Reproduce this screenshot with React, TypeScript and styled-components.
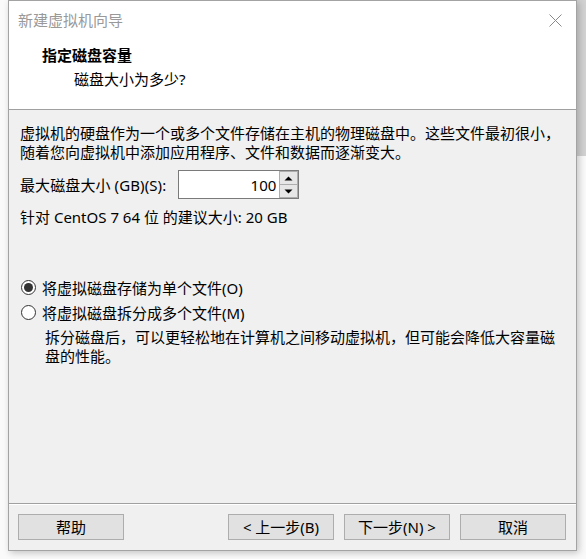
import React from 'react'
import styled, {createGlobalStyle} from 'styled-components'

const GlobalStyle = createGlobalStyle`
  html, body {
    margin: 0;
    padding: 0;
    background: #fafafa;
  }
  body {
    font-family: "Noto Sans", "Noto Sans CJK SC", sans-serif;
    font-size: 15px;
    color: #000;
  }
`

const Page = styled.div`
  display: grid;
  grid-template-columns: 8px 569px 9px;
  height: 559px;
  overflow: hidden;
`

const BackdropStrip = styled.div`
  grid-column: 3;
  height: 156px;
  background: #d2d2d2;
`

const Window = styled.div`
  grid-column: 2;
  grid-row: 1;
  height: 551px;
  box-sizing: border-box;
  border: 1px solid #a3a3a3;
  background: #f0f0f0;
  display: flex;
  flex-direction: column;
  box-shadow: 2px 2px 7px rgba(0, 0, 0, 0.22);
  position: relative;
  z-index: 1;
`

const Header = styled.div`
  height: 108px;
  background: #fff;
  border-bottom: 1px solid #a0a0a0;
  display: flex;
  flex-direction: column;
`

const TitleBar = styled.div`
  height: 38px;
  display: flex;
  align-items: center;
  justify-content: space-between;
  padding: 0 14px 0 9px;
`

const Title = styled.span`
  color: #999;
  line-height: 19px;
`

const CloseButton = styled.span`
  width: 14px;
  height: 14px;
  display: flex;
  align-items: center;
  justify-content: center;
`

const Heading = styled.div`
  margin-top: 7px;
  padding-left: 33px;
  font-weight: bold;
  line-height: 19px;
`

const SubHeading = styled.div`
  margin-top: 5px;
  padding-left: 65px;
  line-height: 19px;
`

const Body = styled.div`
  flex: 1;
  padding: 14px 11px 0;
  display: flex;
  flex-direction: column;
`

const Paragraph = styled.p<{indent?: number}>`
  margin: 0;
  line-height: 19px;
  padding-left: ${(p) => p.indent ?? 0}px;
`

const SizeRow = styled.div`
  margin-top: 8px;
  display: flex;
  align-items: center;
  gap: 12px;
  height: 29px;
`

const SizeLabel = styled.span`
  letter-spacing: 0.1px;
`

const SpinBox = styled.div`
  width: 121px;
  height: 29px;
  box-sizing: border-box;
  border: 1px solid #7a7a7a;
  background: #fff;
  display: flex;
`

const SpinInput = styled.input`
  flex: 1;
  min-width: 0;
  border: none;
  outline: none;
  background: transparent;
  font: inherit;
  text-align: right;
  padding: 0 3px 0 0;
  color: #000;
`

const SpinButtons = styled.div`
  width: 19px;
  display: flex;
  flex-direction: column;
`

const SpinButton = styled.div`
  flex: 1;
  box-sizing: border-box;
  background: #e6e6e6;
  border: 1px solid #adadad;
  display: flex;
  align-items: center;
  justify-content: center;
  & + & {
    border-top: none;
  }
`

const Recommend = styled(Paragraph)`
  margin-top: 9px;
`

const RadioGroup = styled.div`
  margin-top: 48px;
  display: flex;
  flex-direction: column;
`

const RadioRow = styled.label`
  height: 25px;
  display: flex;
  align-items: center;
  gap: 6px;
  padding-left: 1px;
`

const RadioCircle = styled.span<{checked: boolean}>`
  width: 15px;
  height: 15px;
  box-sizing: border-box;
  border-radius: 50%;
  border: 1px solid #333;
  background: #fff;
  display: flex;
  align-items: center;
  justify-content: center;
  &::after {
    content: '';
    width: 9px;
    height: 9px;
    border-radius: 50%;
    background: ${(p) => (p.checked ? '#333' : 'transparent')};
  }
`

const Description = styled(Paragraph)`
  margin-top: 3px;
`

const Footer = styled.div`
  border-top: 1px solid #a0a0a0;
  box-shadow: inset 0 1px 0 #fff;
  padding: 10px 10px 10px 9px;
  display: flex;
  justify-content: space-between;
`

const ButtonGroup = styled.div`
  display: flex;
  gap: 10px;
`

const Button = styled.button`
  width: 106px;
  height: 26px;
  box-sizing: border-box;
  background: #e1e1e1;
  border: 1px solid #adadad;
  font: inherit;
  color: #000;
  padding: 0;
  line-height: 22px;
`

const Triangle: React.FC<{up?: boolean}> = ({up}) => (
  <svg width="9" height="5" viewBox="0 0 9 5">
    <path d={up ? 'M0.5 4.5 L4.5 0.5 L8.5 4.5 Z' : 'M0.5 0.5 L4.5 4.5 L8.5 0.5 Z'} fill="#000" />
  </svg>
)

const App: React.FC = () => {
  return (
    <>
      <GlobalStyle />
      <Page>
        <Window>
          <Header>
            <TitleBar>
              <Title>新建虚拟机向导</Title>
              <CloseButton>
                <svg width="13" height="13" viewBox="0 0 13 13">
                  <path d="M0.5 0.5 L12.5 12.5 M12.5 0.5 L0.5 12.5" stroke="#8a8a8a" strokeWidth="1" />
                </svg>
              </CloseButton>
            </TitleBar>
            <Heading>指定磁盘容量</Heading>
            <SubHeading>磁盘大小为多少?</SubHeading>
          </Header>
          <Body>
            <Paragraph>
              虚拟机的硬盘作为一个或多个文件存储在主机的物理磁盘中。这些文件最初很小，
              <br />
              随着您向虚拟机中添加应用程序、文件和数据而逐渐变大。
            </Paragraph>
            <SizeRow>
              <SizeLabel>最大磁盘大小 (GB)(S):</SizeLabel>
              <SpinBox>
                <SpinInput defaultValue="100" />
                <SpinButtons>
                  <SpinButton>
                    <Triangle up />
                  </SpinButton>
                  <SpinButton>
                    <Triangle />
                  </SpinButton>
                </SpinButtons>
              </SpinBox>
            </SizeRow>
            <Recommend>针对 CentOS 7 64 位 的建议大小: 20 GB</Recommend>
            <RadioGroup>
              <RadioRow>
                <RadioCircle checked />
                将虚拟磁盘存储为单个文件(O)
              </RadioRow>
              <RadioRow>
                <RadioCircle checked={false} />
                将虚拟磁盘拆分成多个文件(M)
              </RadioRow>
              <Description indent={25}>
                拆分磁盘后，可以更轻松地在计算机之间移动虚拟机，但可能会降低大容量磁
                <br />
                盘的性能。
              </Description>
            </RadioGroup>
          </Body>
          <Footer>
            <Button>帮助</Button>
            <ButtonGroup>
              <Button>&lt; 上一步(B)</Button>
              <Button>下一步(N) &gt;</Button>
              <Button>取消</Button>
            </ButtonGroup>
          </Footer>
        </Window>
        <BackdropStrip />
      </Page>
    </>
  )
}

export default App
